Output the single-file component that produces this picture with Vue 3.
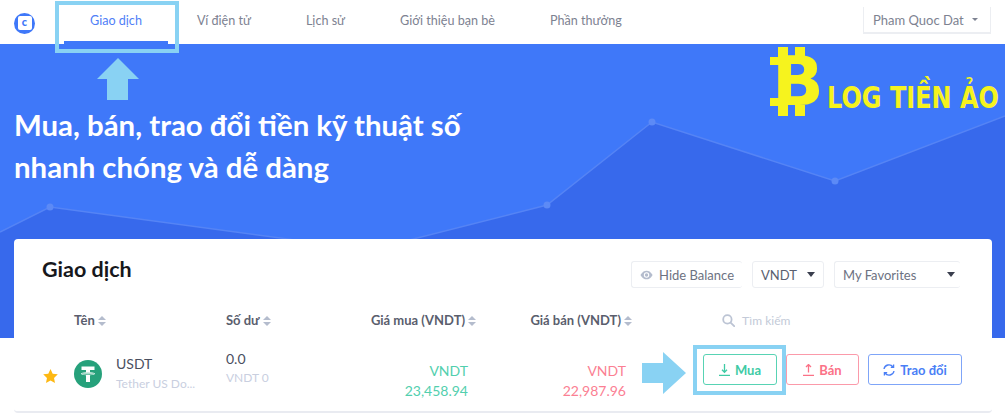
<template>
  <div class="page">
    <!-- top bar -->
    <header class="topbar">
      <div class="brand">
        <span class="brand-ring"><span class="brand-box">c</span></span>
      </div>
      <nav class="nav">
        <a
          v-for="(item, i) in navItems"
          :key="item"
          class="nav-item"
          :class="{ active: i === 0 }"
        >{{ item }}</a>
      </nav>
      <div class="user-select">
        <span>Pham Quoc Dat</span>
        <i class="caret small"></i>
      </div>
    </header>

    <!-- hero -->
    <section class="hero">
      <svg class="hero-chart" viewBox="0 0 1005 294" width="1005" height="294">
        <path
          d="M0 188 L50 163 L370 206 L547 161 L652 78 L835 137 L1005 72 L1005 294 L0 294 Z"
          fill="#3769ec"
        />
        <path
          d="M0 188 L50 163 L370 206 L547 161 L652 78 L835 137 L1005 72"
          fill="none"
          stroke="#5584f5"
          stroke-width="1.5"
        />
        <circle v-for="p in chartDots" :key="p[0]" :cx="p[0]" :cy="p[1]" r="3.5" fill="#5c8af6" />
      </svg>
      <h1 class="hero-title">Mua, bán, trao đổi tiền kỹ thuật số<br />nhanh chóng và dễ dàng</h1>
      <div class="blog-logo">
        <span class="blog-b">B</span>
        <span class="blog-text">LOG TIỀN ẢO</span>
      </div>
    </section>

    <!-- card -->
    <section class="card">
      <div class="card-head">
        <h2 class="card-title">Giao dịch</h2>
        <div class="filters">
          <div class="filter hide-balance">
            <svg width="14" height="10" viewBox="0 0 15 10">
              <path d="M0.5 5 C3 1 5 0 7.5 0 C10 0 12 1 14.5 5 C12 9 10 10 7.5 10 C5 10 3 9 0.5 5 Z" fill="#b4bccd" />
              <circle cx="7.5" cy="5" r="3.1" fill="#fff" />
              <circle cx="7.5" cy="5" r="1.9" fill="#b4bccd" />
            </svg>
            <span>Hide Balance</span>
          </div>
          <div class="filter vndt">
            <span>VNDT</span>
            <i class="caret"></i>
          </div>
          <div class="filter favorites">
            <span>My Favorites</span>
            <i class="caret"></i>
          </div>
        </div>
      </div>

      <div class="table-head">
        <div class="col-star"></div>
        <div class="col-name th">Tên<svg class="sort" width="8" height="10" viewBox="0 0 8 10"><path d="M4 0 L8 4 L0 4 Z M4 10 L0 6 L8 6 Z" fill="#b4bccd" /></svg></div>
        <div class="col-balance th">Số dư<svg class="sort" width="8" height="10" viewBox="0 0 8 10"><path d="M4 0 L8 4 L0 4 Z M4 10 L0 6 L8 6 Z" fill="#b4bccd" /></svg></div>
        <div class="col-buy-h th">Giá mua (VNDT)<svg class="sort" width="8" height="10" viewBox="0 0 8 10"><path d="M4 0 L8 4 L0 4 Z M4 10 L0 6 L8 6 Z" fill="#b4bccd" /></svg></div>
        <div class="col-sell-h th">Giá bán (VNDT)<svg class="sort" width="8" height="10" viewBox="0 0 8 10"><path d="M4 0 L8 4 L0 4 Z M4 10 L0 6 L8 6 Z" fill="#b4bccd" /></svg></div>
        <div class="search">
          <svg width="13" height="13" viewBox="0 0 13 13" fill="none" stroke="#bcc4d4" stroke-width="1.8">
            <circle cx="5.4" cy="5.4" r="4.2" />
            <path d="M8.6 8.6 L12.2 12.2" stroke-linecap="round" />
          </svg>
          <span>Tìm kiếm</span>
        </div>
      </div>

      <div class="table-row">
        <div class="col-star star">
          <svg width="15" height="14" viewBox="0 0 24 23">
            <path d="M12 0 L15.6 7.8 L24 8.8 L17.8 14.6 L19.4 23 L12 18.8 L4.6 23 L6.2 14.6 L0 8.8 L8.4 7.8 Z" fill="#fdb813" />
          </svg>
        </div>
        <div class="col-name coin">
          <svg class="coin-icon" width="28" height="28" viewBox="0 0 28 28">
            <circle cx="14" cy="14" r="14" fill="#26a17b" />
            <path d="M7.5 6.5 H20.5 V10 H16 V12.3 C18.8 12.5 21 13 21 13.8 C21 14.6 18.8 15.1 16 15.3 V22 H12 V15.3 C9.2 15.1 7 14.6 7 13.8 C7 13 9.2 12.5 12 12.3 V10 H7.5 Z" fill="#fff" />
            <ellipse cx="14" cy="13.7" rx="6" ry="1" fill="#26a17b" />
            <ellipse cx="14" cy="13.7" rx="6" ry="0.5" fill="#d9f0e9" />
          </svg>
          <div class="coin-text">
            <div class="coin-symbol">USDT</div>
            <div class="coin-name">Tether US Do...</div>
          </div>
        </div>
        <div class="col-balance balance">
          <div class="balance-val">0.0</div>
          <div class="balance-sub">VNDT 0</div>
        </div>
        <div class="col-buy price">
          <div>VNDT</div>
          <div>23,458.94</div>
        </div>
        <div class="col-sell price">
          <div>VNDT</div>
          <div>22,987.96</div>
        </div>
        <div class="actions">
          <button class="btn btn-buy">
            <svg width="11" height="12" viewBox="0 0 11 12" fill="none" stroke="currentColor" stroke-width="1.3">
              <path d="M5.5 0 V8 M3 5.8 L5.5 8.3 L8 5.8 M0 11.3 H11" />
            </svg>
            Mua
          </button>
          <button class="btn btn-sell">
            <svg width="11" height="12" viewBox="0 0 11 12" fill="none" stroke="currentColor" stroke-width="1.3">
              <path d="M5.5 8.5 V0.8 M3 3 L5.5 0.5 L8 3 M0 11.3 H11" />
            </svg>
            Bán
          </button>
          <button class="btn btn-swap">
            <svg width="12" height="12" viewBox="0 0 12 12" fill="none" stroke="currentColor" stroke-width="1.3">
              <path d="M1 5 A5 5 0 0 1 10 3 M10.6 0.6 V3.4 H7.8 M11 7 A5 5 0 0 1 2 9 M1.4 11.4 V8.6 H4.2" />
            </svg>
            Trao đổi
          </button>
        </div>
      </div>
    </section>

    <!-- annotations drawn over the page -->
    <div class="mark mark-nav"></div>
    <div class="mark mark-buy"></div>
    <svg class="arrow arrow-up" width="42" height="42" viewBox="0 0 42 42">
      <path d="M21 0 L42 21 H31 V42 H10 V21 H0 Z" fill="#89d2f3" />
    </svg>
    <svg class="arrow arrow-right" width="44" height="42" viewBox="0 0 44 42">
      <path d="M44 21 L21 0 V11 H0 V31 H21 V42 Z" fill="#89d2f3" />
    </svg>
  </div>
</template>

<script setup>
const navItems = ['Giao dịch', 'Ví điện tử', 'Lịch sử', 'Giới thiệu bạn bè', 'Phần thưởng']

const chartDots = [
  [50, 163],
  [547, 161],
  [652, 78],
  [835, 137]
]
</script>

<style>
body {
  background: #fff;
}
</style>

<style scoped>
.page {
  position: relative;
  width: 1005px;
  height: 420px;
  overflow: hidden;
  font-family: Lato, "Noto Sans", sans-serif;
  color: #4a4f5f;
}

/* top bar */
.topbar {
  display: flex;
  align-items: stretch;
  height: 44px;
  background: #fff;
  padding-left: 14px;
  box-sizing: border-box;
}

.brand {
  width: 50px;
  display: flex;
  align-items: center;
}

.brand-ring {
  width: 21px;
  height: 21px;
  margin-top: 2px;
  border-radius: 50%;
  background: #3f78f9;
  display: flex;
  align-items: center;
  justify-content: center;
}

.brand-box {
  width: 14px;
  height: 14px;
  border-radius: 2px;
  background: #fff;
  color: #3f78f9;
  font-size: 11px;
  font-weight: 900;
  line-height: 12px;
  text-align: center;
}

.nav {
  display: flex;
  gap: 3px;
}

.nav-item {
  padding: 0 26px;
  line-height: 42px;
  height: 44px;
  box-sizing: border-box;
  font-size: 12.6px;
  color: #7d8291;
  white-space: nowrap;
}

.nav-item.active {
  color: #4f80f7;
  border-bottom: 3px solid #3f78f9;
}

.user-select {
  margin-left: auto;
  margin-right: 14px;
  margin-top: 7px;
  width: 128px;
  height: 27px;
  box-sizing: border-box;
  border: 1px solid #eceef2;
  border-top: 0;
  border-bottom-width: 2px;
  padding: 0 9px;
  display: flex;
  align-items: center;
  justify-content: space-between;
  font-size: 13px;
  color: #7d8291;
}

.caret {
  width: 0;
  height: 0;
  border-left: 4.5px solid transparent;
  border-right: 4.5px solid transparent;
  border-top: 5px solid #3a3f4e;
}

.caret.small {
  border-left-width: 3.5px;
  border-right-width: 3.5px;
  border-top: 3.5px solid #7d8291;
  margin-right: 3px;
}

/* hero */
.hero {
  position: relative;
  height: 294px;
  background: #3f78f9;
  box-sizing: border-box;
  padding: 60px 0 0 14px;
}

.hero-chart {
  position: absolute;
  left: 0;
  top: 0;
}

.hero-title {
  position: relative;
  margin: 0;
  font-size: 29.4px;
  line-height: 42px;
  font-weight: 700;
  color: #fff;
}

.blog-logo {
  position: absolute;
  left: 770px;
  top: 3px;
  display: flex;
  align-items: flex-end;
  height: 69px;
  color: #f6f31e;
  font-family: "DejaVu Sans", sans-serif;
  font-weight: 700;
  white-space: nowrap;
}

.blog-b {
  position: relative;
  width: 57px;
  height: 69px;
  font-size: 68px;
  line-height: 69px;
  text-indent: 2px;
}

/* ticks above and below the B */
.blog-b::before {
  content: '';
  position: absolute;
  left: 8px;
  top: 0;
  width: 27px;
  height: 69px;
  box-sizing: border-box;
  border-left: 10px solid #f6f31e;
  border-right: 10px solid #f6f31e;
  clip-path: polygon(0 0, 100% 0, 100% 16%, 0 16%, 0 84%, 100% 84%, 100% 100%, 0 100%);
}

/* serif nubs on the left of the B */
.blog-b::after {
  content: '';
  position: absolute;
  left: 0;
  top: 10px;
  width: 12px;
  height: 49px;
  box-sizing: border-box;
  border-top: 8px solid #f6f31e;
  border-bottom: 8px solid #f6f31e;
}

.blog-text {
  font-size: 24px;
  line-height: 28px;
  margin-bottom: 1px;
  transform: scaleY(1.25);
  transform-origin: left bottom;
}

/* card */
.card {
  position: relative;
  margin: -99px 13px 0 14px;
  background: #fff;
  border-radius: 4px;
  border-bottom: 2px solid #e9ebf1;
  height: 174px;
  box-sizing: border-box;
}

.card-head {
  display: flex;
  justify-content: space-between;
  align-items: center;
  height: 27px;
  padding: 22px 32px 0 28px;
}

.card-title {
  margin: -11px 0 0;
  font-size: 21.5px;
  font-weight: 700;
  color: #17181c;
}

.filters {
  display: flex;
  gap: 10px;
}

.filter {
  height: 27px;
  box-sizing: border-box;
  border: 1px solid #eceef2;
  border-radius: 3px;
  display: flex;
  align-items: center;
  font-size: 13px;
  color: #6d7282;
  padding: 0 8px;
  white-space: nowrap;
}

.hide-balance {
  width: 111px;
  gap: 6px;
  border-right: 0;
}

.vndt {
  width: 72px;
  justify-content: space-between;
  color: #5a5f6f;
}

.favorites {
  width: 126px;
  justify-content: space-between;
  border-right: 0;
  padding-right: 5px;
}

.table-head,
.table-row {
  display: flex;
  align-items: center;
  padding-left: 29px;
}

.table-head {
  height: 36px;
  margin-top: 14px;
}

.table-row {
  height: 72px;
}

.col-star {
  width: 31px;
  flex: none;
}

.col-name {
  width: 152px;
  flex: none;
}

.col-balance {
  width: 100px;
  flex: none;
}

.col-buy-h,
.col-sell-h,
.col-buy,
.col-sell {
  flex: none;
  text-align: right;
}

.col-buy-h {
  width: 150px;
}

.col-sell-h {
  width: 156px;
}

.col-buy {
  width: 142px;
}

.col-sell {
  width: 158px;
}

.th {
  font-size: 13px;
  font-weight: 700;
  color: #5a5e6d;
  white-space: nowrap;
}

.sort {
  margin-left: 3px;
  vertical-align: -1px;
}

.search {
  margin-left: 90px;
  display: flex;
  align-items: center;
  gap: 7px;
  font-size: 12px;
  color: #c3cad8;
}

.star {
  display: flex;
  margin-top: 3px;
}

.coin {
  display: flex;
  align-items: center;
  gap: 14px;
}

.coin-icon {
  flex: none;
}

.coin-symbol {
  font-size: 14px;
  color: #4a4f5f;
  line-height: 20px;
}

.coin-name {
  font-size: 12px;
  color: #c9cfdf;
  line-height: 20px;
}

.balance {
  margin-top: -13px;
}

.balance-val {
  font-size: 14px;
  line-height: 20px;
}

.balance-sub {
  font-size: 12px;
  line-height: 18px;
  color: #c9cfdf;
}

.price {
  font-size: 14px;
  line-height: 20px;
  margin-top: 14px;
}

.col-buy {
  color: #52cfae;
}

.col-sell {
  color: #fb7f93;
}

.actions {
  display: flex;
  gap: 9px;
  margin-left: auto;
  margin-top: -9px;
  padding-right: 30px;
}

.btn {
  height: 31px;
  box-sizing: border-box;
  display: flex;
  align-items: center;
  justify-content: center;
  gap: 5px;
  background: #fff;
  border-radius: 3px;
  border: 1px solid;
  font-family: inherit;
  font-size: 13px;
  font-weight: 700;
  padding: 0;
}

.btn-buy {
  width: 74px;
  color: #3fcba5;
  border-color: #58d3b4;
}

.btn-sell {
  width: 73px;
  color: #fb7287;
  border-color: #fb9aaa;
}

.btn-swap {
  width: 94px;
  color: #4a7ff6;
  border-color: #7fa5f8;
}

/* annotations */
.mark {
  position: absolute;
  box-sizing: border-box;
  border: 4px solid #89d2f3;
}

.mark-nav {
  left: 55px;
  top: 1px;
  width: 124px;
  height: 52px;
}

.mark-buy {
  left: 693px;
  top: 345px;
  width: 93px;
  height: 50px;
}

.arrow {
  position: absolute;
}

.arrow-up {
  left: 97px;
  top: 58px;
}

.arrow-right {
  left: 642px;
  top: 352px;
}
</style>
